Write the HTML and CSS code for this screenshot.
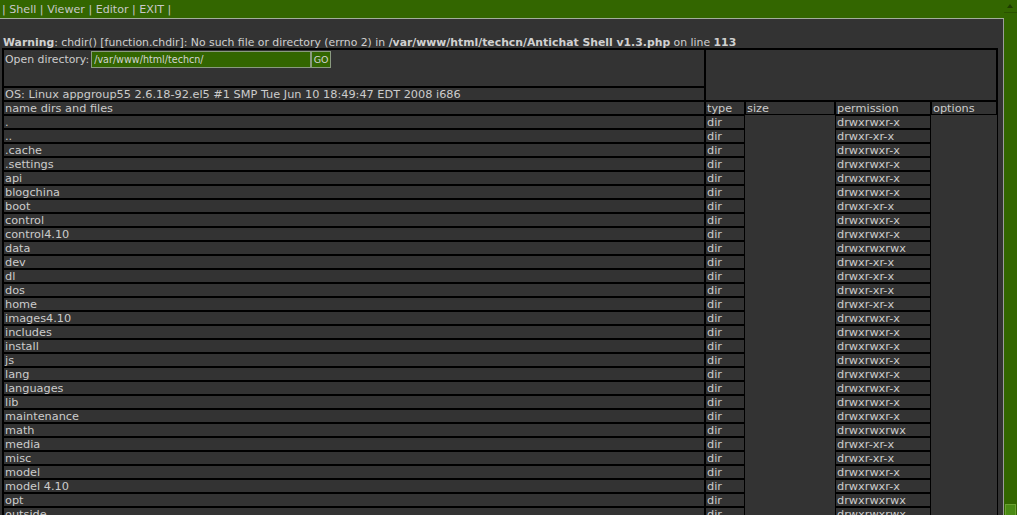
FILE: index.html
```html
<!DOCTYPE html>
<html>
<head>
<meta charset="utf-8">
<title>Antichat Shell v1.3</title>
<link rel="stylesheet" href="styles.css">
</head>
<body>
<div class="page">
  <div class="main">
    <div class="topbar">| <a href="#">Shell</a> | <a href="#">Viewer</a> | <a href="#">Editor</a> | <a href="#">EXIT</a> |</div>
    <div class="content">
      <div class="warning"><b>Warning</b>: chdir() [function.chdir]: No such file or directory (errno 2) in <b>/var/www/html/techcn/Antichat Shell v1.3.php</b> on line <b>113</b></div>
      <table class="listing">
        <colgroup>
          <col class="c-name"><col class="c-type"><col class="c-size"><col class="c-perm"><col class="c-opt">
        </colgroup>
        <tr class="r-form">
          <td class="formcell"><form class="dirform"><span class="lbl">Open directory:</span><input class="dirinput" type="text" value="/var/www/html/techcn/"><button class="go" type="button">GO</button></form></td>
          <td class="side" colspan="4" rowspan="2"></td>
        </tr>
        <tr><td>OS: Linux appgroup55 2.6.18-92.el5 #1 SMP Tue Jun 10 18:49:47 EDT 2008 i686</td></tr>
        <tr><td>name dirs and files</td><td>type</td><td>size</td><td>permission</td><td>options</td></tr>
        <tr><td>.</td><td>dir</td><td class="e"></td><td>drwxrwxr-x</td><td class="e"></td></tr>
        <tr><td>..</td><td>dir</td><td class="e"></td><td>drwxr-xr-x</td><td class="e"></td></tr>
        <tr><td>.cache</td><td>dir</td><td class="e"></td><td>drwxrwxr-x</td><td class="e"></td></tr>
        <tr><td>.settings</td><td>dir</td><td class="e"></td><td>drwxrwxr-x</td><td class="e"></td></tr>
        <tr><td>api</td><td>dir</td><td class="e"></td><td>drwxrwxr-x</td><td class="e"></td></tr>
        <tr><td>blogchina</td><td>dir</td><td class="e"></td><td>drwxrwxr-x</td><td class="e"></td></tr>
        <tr><td>boot</td><td>dir</td><td class="e"></td><td>drwxr-xr-x</td><td class="e"></td></tr>
        <tr><td>control</td><td>dir</td><td class="e"></td><td>drwxrwxr-x</td><td class="e"></td></tr>
        <tr><td>control4.10</td><td>dir</td><td class="e"></td><td>drwxrwxr-x</td><td class="e"></td></tr>
        <tr><td>data</td><td>dir</td><td class="e"></td><td>drwxrwxrwx</td><td class="e"></td></tr>
        <tr><td>dev</td><td>dir</td><td class="e"></td><td>drwxr-xr-x</td><td class="e"></td></tr>
        <tr><td>dl</td><td>dir</td><td class="e"></td><td>drwxr-xr-x</td><td class="e"></td></tr>
        <tr><td>dos</td><td>dir</td><td class="e"></td><td>drwxr-xr-x</td><td class="e"></td></tr>
        <tr><td>home</td><td>dir</td><td class="e"></td><td>drwxr-xr-x</td><td class="e"></td></tr>
        <tr><td>images4.10</td><td>dir</td><td class="e"></td><td>drwxrwxr-x</td><td class="e"></td></tr>
        <tr><td>includes</td><td>dir</td><td class="e"></td><td>drwxrwxr-x</td><td class="e"></td></tr>
        <tr><td>install</td><td>dir</td><td class="e"></td><td>drwxrwxr-x</td><td class="e"></td></tr>
        <tr><td>js</td><td>dir</td><td class="e"></td><td>drwxrwxr-x</td><td class="e"></td></tr>
        <tr><td>lang</td><td>dir</td><td class="e"></td><td>drwxrwxr-x</td><td class="e"></td></tr>
        <tr><td>languages</td><td>dir</td><td class="e"></td><td>drwxrwxr-x</td><td class="e"></td></tr>
        <tr><td>lib</td><td>dir</td><td class="e"></td><td>drwxrwxr-x</td><td class="e"></td></tr>
        <tr><td>maintenance</td><td>dir</td><td class="e"></td><td>drwxrwxr-x</td><td class="e"></td></tr>
        <tr><td>math</td><td>dir</td><td class="e"></td><td>drwxrwxrwx</td><td class="e"></td></tr>
        <tr><td>media</td><td>dir</td><td class="e"></td><td>drwxr-xr-x</td><td class="e"></td></tr>
        <tr><td>misc</td><td>dir</td><td class="e"></td><td>drwxr-xr-x</td><td class="e"></td></tr>
        <tr><td>model</td><td>dir</td><td class="e"></td><td>drwxrwxr-x</td><td class="e"></td></tr>
        <tr><td>model 4.10</td><td>dir</td><td class="e"></td><td>drwxrwxr-x</td><td class="e"></td></tr>
        <tr><td>opt</td><td>dir</td><td class="e"></td><td>drwxrwxrwx</td><td class="e"></td></tr>
        <tr><td>outside</td><td>dir</td><td class="e"></td><td>drwxrwxrwx</td><td class="e"></td></tr>
      </table>
    </div>
  </div>
  <div class="scrollbar">
    <div class="sb-up"><svg width="12" height="12" viewBox="0 0 12 12"><path d="M3 8 L6 4 L9 8 Z" fill="#1f3d00"/></svg></div>
    <div class="sb-down"></div>
  </div>
</div>
</body>
</html>
```
FILE: styles.css
```css
html, body {
  margin: 0;
  padding: 0;
  height: 100%;
  overflow: hidden;
  background: #333333;
}

.page {
  display: flex;
  height: 515px;
  font-family: "DejaVu Sans", Verdana, sans-serif;
  color: #cccccc;
}

.main {
  width: 1004px;
  flex: 0 0 1004px;
  display: flex;
  flex-direction: column;
  overflow: hidden;
}

.topbar {
  box-sizing: border-box;
  height: 19px;
  line-height: 18px;
  padding-top: 1px;
  background: #336600;
  color: #c8c8c8;
  font-size: 11.1px;
  padding-left: 2px;
  border-bottom: 1px solid #a4ae9c;
  white-space: nowrap;
}

.topbar a {
  color: #c8c8c8;
  text-decoration: none;
}

.content {
  flex: 1;
  border-right: 1px solid #9c9c9c;
  overflow: hidden;
}

.warning {
  margin-top: 17px;
  height: 12px;
  line-height: 13px;
  font-size: 10.85px;
  padding-left: 3px;
  white-space: nowrap;
  color: #d0d0d0;
}

.listing {
  margin-left: 2px;
  width: 996px;
  table-layout: fixed;
  border-collapse: separate;
  border-spacing: 0;
  border: 1px solid #000;
}

.c-name { width: 702px; }
.c-type { width: 40px; }
.c-size { width: 90px; }
.c-perm { width: 96px; }
.c-opt { width: 66px; }

.listing td {
  box-sizing: border-box;
  border: 1px solid #000;
  height: 14px;
  padding: 1px 0 0 1px;
  font-size: 11.3px;
  line-height: 11px;
  color: #cccccc;
  white-space: nowrap;
  overflow: hidden;
  vertical-align: middle;
  background: #333333;
}

.listing td.e {
  border-color: #333333;
}

.listing tr.r-form td.formcell {
  height: 38px;
  vertical-align: top;
  padding-top: 1px;
}

.dirform {
  margin: 0;
  display: flex;
  align-items: center;
  height: 17px;
}

.lbl {
  font-size: 10.9px;
  margin-right: 2px;
}

.dirinput {
  box-sizing: border-box;
  width: 220px;
  height: 17px;
  margin: 0;
  padding: 0 2px;
  background: #336600;
  color: #d4d4d4;
  border: 1px solid #8a9a80;
  font-family: "DejaVu Sans", Verdana, sans-serif;
  font-size: 9.6px;
  outline: none;
}

.go {
  box-sizing: border-box;
  width: 20px;
  height: 17px;
  margin: 0;
  padding: 0;
  background: #336600;
  color: #d4d4d4;
  border: 1px solid #8a9a80;
  font-family: "DejaVu Sans", Verdana, sans-serif;
  font-size: 9.5px;
}

.scrollbar {
  flex: 1;
  background: #336600;
  display: flex;
  flex-direction: column;
  justify-content: space-between;
}

.sb-up {
  height: 12px;
  border-bottom: 1px solid #2a5200;
}

.sb-up svg {
  display: block;
}

.sb-down {
  height: 10px;
  margin: 0 1px;
  background: #4a8a14;
  border: 1px solid #6aa030;
  border-bottom: none;
}
```
